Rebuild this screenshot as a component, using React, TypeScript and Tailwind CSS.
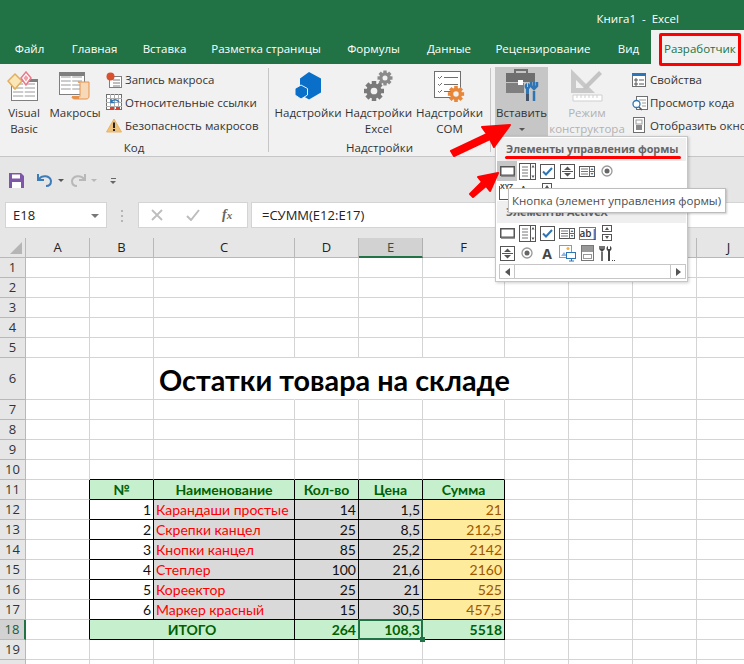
import type { ReactNode } from "react";

const colWidths = "grid-cols-[26px_64px_64px_141px_64px_64px_82px_64px_64px_64px_64px]";
const letters = ["A", "B", "C", "D", "E", "F", "G", "H", "I", "J"];

const tabs = [
  { label: "Файл", w: "w-[59px]" },
  { label: "Главная", w: "w-[71px]" },
  { label: "Вставка", w: "w-[69px]" },
  { label: "Разметка страницы", w: "w-[134px]" },
  { label: "Формулы", w: "w-[81px]" },
  { label: "Данные", w: "w-[70px]" },
  { label: "Рецензирование", w: "w-[118px]" },
  { label: "Вид", w: "w-[53px]" },
];

const items = [
  ["1", "Карандаши простые", "14", "1,5", "21"],
  ["2", "Скрепки канцел", "25", "8,5", "212,5"],
  ["3", "Кнопки канцел", "85", "25,2", "2142"],
  ["4", "Степлер", "100", "21,6", "2160"],
  ["5", "Кореектор", "25", "21", "525"],
  ["6", "Маркер красный", "15", "30,5", "457,5"],
];

const line = "border-r border-b border-[#d4d4d4]";
const boxed = "border-r border-b border-black";
const calibri = "[font-family:'Lato','Open_Sans',sans-serif]";
const cellText = `${calibri} text-[14px] leading-[20px] whitespace-nowrap px-[2px] text-[#111]`;

function Icon({ w, h, children, className }: { w: number; h: number; children: ReactNode; className?: string }) {
  return (
    <svg width={w} height={h} viewBox={`0 0 ${w} ${h}`} className={className}>
      {children}
    </svg>
  );
}

function Sheet({ x, y, w, h }: { x: number; y: number; w: number; h: number }) {
  const rows = [];
  for (let yy = y + 5; yy < y + h - 1; yy += 4) rows.push(<path key={yy} d={`M${x + 2} ${yy}H${x + w - 2}`} stroke="#9a9a9a" />);
  return (
    <g>
      <rect x={x + 0.5} y={y + 0.5} width={w} height={h} fill="#fff" stroke="#7f7f7f" />
      {rows}
      <path d={`M${x + w / 2} ${y + 3}V${y + h - 2}`} stroke="#fff" strokeWidth="1.5" />
    </g>
  );
}

function VbaIcon() {
  return (
    <Icon w={34} h={30}>
      <Sheet x={4} y={8} w={26} h={21} />
      <rect x={4} y={8} width={26} height={3} fill="#7f7f7f" />
      <path d="M8 3l7 7-7 8-7-8z" fill="#fbe6b8" stroke="#e0b060" strokeWidth="1.5" />
      <path d="M19 1l5 6-5 7-5-7z" fill="#fff" stroke="#e77a8a" strokeWidth="1.5" />
      <path d="M19 4l2.500 3-2.500 3.500-2.500-3.500z" fill="#f0a0a8" />
    </Icon>
  );
}

function MacroIcon() {
  return (
    <Icon w={34} h={30}>
      <Sheet x={1} y={1} w={25} h={22} />
      <rect x={1} y={1} width={26} height={4} fill="#7f7f7f" />
      <path d="M20 11h11v14c0 2-1 3-3 3h-11c-2 0-3-1-3-2h7c1 0 1-1 1-2v-11c0-1 0-2-2-2z" fill="#f5d9b8" stroke="#e8914a" />
      <path d="M14 25h7v3h-5c-1 0-2-1-2-3z" fill="#e8914a" />
    </Icon>
  );
}

function RecordIcon() {
  return (
    <Icon w={17} h={16}>
      <rect x={3.500} y={4.500} width={12} height={11} fill="#fff" stroke="#7f7f7f" />
      <path d="M7 8h7M7 11h7M7 14h7" stroke="#7f7f7f" />
      <circle cx={4.500} cy={4.500} r={4} fill="#d9502e" />
    </Icon>
  );
}

function RelativeIcon() {
  return (
    <Icon w={17} h={17}>
      <rect x={0.500} y={0.500} width={15} height={15} fill="#fff" stroke="#6f6f6f" />
      <path d="M0 4.500h16M0 8.500h16M0 12.500h16M4.500 0v16M8.500 0v16M12.500 0v16" stroke="#b0b0b0" />
      <rect x={4} y={13} width={4} height={3} fill="#d9402e" />
      <rect x={10} y={13} width={4} height={3} fill="#d9402e" />
      <path d="M5 8c2-3 6-3 8 0M5 5v3.500h3.500" fill="none" stroke="#2e75b6" strokeWidth="1.500" />
    </Icon>
  );
}

function WarningIcon() {
  return (
    <Icon w={16} h={15}>
      <path d="M8 1l7.500 13H.5z" fill="#edc27c" stroke="#e8b566" />
      <rect x={7} y={4.500} width={2} height={5.500} fill="#222" />
      <rect x={7} y={11} width={2} height={2} fill="#222" />
    </Icon>
  );
}

function AddinIcon() {
  return (
    <Icon w={28} h={30}>
      <path d="M15 1l12 6.500v14l-12 7-6-3.500v-9l-3-1.500V7.500z" fill="#0a6fc9" />
      <path d="M7 14l6.500 3.500v6.500l-6.500 4-6-4v-6.500z" fill="#0a6fc9" stroke="#f1f1f1" />
    </Icon>
  );
}

function GearShape({ cx, cy, r, fill }: { cx: number; cy: number; r: number; fill: string }) {
  const teeth = [0, 45, 90, 135].map((a) => (
    <rect key={a} x={cx - r * 0.28} y={cy - r * 1.25} width={r * 0.56} height={r * 2.5} fill={fill} transform={`rotate(${a} ${cx} ${cy})`} />
  ));
  return (
    <g>
      {teeth}
      <circle cx={cx} cy={cy} r={r * 0.95} fill={fill} />
      <circle cx={cx} cy={cy} r={r * 0.42} fill="#f1f1f1" />
    </g>
  );
}

function GearsIcon() {
  return (
    <Icon w={30} h={32}>
      <GearShape cx={21} cy={8} r={6} fill="#8a8a8a" />
      <GearShape cx={10} cy={21} r={8} fill="#7a7a7a" />
    </Icon>
  );
}

function ComIcon() {
  return (
    <Icon w={33} h={32}>
      <rect x={1.500} y={1.500} width={26} height={26} fill="#fff" stroke="#6f6f6f" />
      <path d="M5 7l1.500 1.500L9 6M5 14l1.500 1.500L9 13M5 21l1.500 1.500L9 20" fill="none" stroke="#6f6f6f" />
      <path d="M11 7.500h14M11 14.500h14M11 21.500h7" stroke="#6f6f6f" />
      <GearShape cx={23} cy={24} r={6.500} fill="#e8873a" />
    </Icon>
  );
}

function BriefcaseIcon() {
  return (
    <Icon w={34} h={36}>
      <path d="M10 5V2h12v3" fill="none" stroke="#6f6f6f" strokeWidth="2" />
      <rect x={1} y={5} width={29} height={9} fill="#6f6f6f" />
      <rect x={1} y={15} width={18} height={10} fill="#7f7f7f" />
      <rect x={13} y={12} width={5} height={5} fill="#fff" />
      <path d="M22 15c-3 1-3 5-1 6v12h3V21c2-1 2-5-1-6v4h-1z" fill="#2e75b6" />
      <path d="M29 14v7M26 14v4l3 3 3-3v-4M29 23v10" fill="none" stroke="#2e75b6" strokeWidth="2.500" />
      <path d="M21 26h3v7h-3z" fill="#44546a" />
    </Icon>
  );
}

function DesignIcon() {
  return (
    <Icon w={34} h={36}>
      <path d="M1 1v24h24zM6 12v8h8z" fill="#c9c9c9" fillRule="evenodd" />
      <path d="M14 18L29 3l3 3-15 15-4 1z" fill="#c4c4c4" />
      <path d="M3 27h29v6H3z" fill="#fff" stroke="#cfcfcf" />
      <path d="M7 27v3M11 27v3M15 27v3M19 27v3M23 27v3M27 27v3" stroke="#cfcfcf" />
    </Icon>
  );
}

function PropertiesIcon() {
  return (
    <Icon w={16} h={16}>
      <rect x={1.500} y={1.500} width={13} height={13} fill="#fff" stroke="#6f6f6f" />
      <rect x={1} y={1} width={14} height={3} fill="#2e75b6" />
      <path d="M4 7h2v2H4zM4 11h2v2H4z" fill="none" stroke="#555" />
      <path d="M8 8h5M8 12h5" stroke="#555" />
    </Icon>
  );
}

function CodeIcon() {
  return (
    <Icon w={18} h={16}>
      <rect x={5.500} y={1.500} width={11} height={13} fill="#fff" stroke="#6f6f6f" />
      <path d="M8 5h7M11 8h4M11 11h4" stroke="#999" />
      <circle cx={5.500} cy={9} r={3.500} fill="#fff" stroke="#2e75b6" strokeWidth="1.300" />
      <path d="M8 12l3 3" stroke="#555" strokeWidth="1.500" />
    </Icon>
  );
}

function WindowIcon() {
  return (
    <Icon w={16} h={17}>
      <rect x={2.500} y={0.500} width={11} height={15} fill="#fff" stroke="#6f6f6f" />
      <rect x={5} y={3} width={6} height={4} fill="#fff" stroke="#9a9a9a" />
      <rect x={5} y={8} width={6} height={5} fill="#8a8a8a" />
    </Icon>
  );
}

// элементы выпадающего списка
function CtlButton() {
  return (
    <Icon w={15} h={11}>
      <rect x={0.750} y={0.750} width={13.500} height={8.500} fill="#fff" stroke="#555" strokeWidth="1.500" />
      <path d="M1 10h14" stroke="#777" strokeWidth="1.500" />
    </Icon>
  );
}
function CtlList() {
  return (
    <Icon w={17} h={17}>
      <rect x={0.500} y={0.500} width={16} height={16} fill="#fff" stroke="#555" />
      <path d="M11.500 0v17" stroke="#555" />
      <path d="M3 4h6M3 7h6M3 10h6M3 13h6" stroke="#777" />
      <path d="M14 2l1.500 2.500h-3zM14 15l1.500-2.500h-3z" fill="#555" />
    </Icon>
  );
}
function CtlCheck() {
  return (
    <Icon w={15} h={15}>
      <rect x={0.500} y={0.500} width={14} height={14} fill="#fff" stroke="#555" />
      <path d="M3 7.500l3 3 6-6.500" fill="none" stroke="#2e75b6" strokeWidth="2" />
    </Icon>
  );
}
function CtlSpin() {
  return (
    <Icon w={15} h={15}>
      <rect x={0.500} y={0.500} width={14} height={14} fill="#fff" stroke="#555" />
      <path d="M2 7.500h11" stroke="#555" />
      <path d="M7.500 2.500l3.500 3.500H4zM7.500 12.500l3.500-3.500H4z" fill="#555" />
    </Icon>
  );
}
function CtlListSpin() {
  return (
    <Icon w={16} h={11}>
      <rect x={0.500} y={0.500} width={15} height={10} fill="#fff" stroke="#555" />
      <path d="M10.500 0v11M10.500 5.500H16" stroke="#2e75b6" />
      <path d="M2 3h7M2 5.500h7M2 8h7" stroke="#777" />
      <path d="M13 2l1.500 2h-3zM13 9l1.500-2h-3z" fill="#2e75b6" />
    </Icon>
  );
}
function CtlRadio() {
  return (
    <Icon w={12} h={12}>
      <circle cx={6} cy={6} r={5} fill="#fff" stroke="#999" strokeWidth="1.300" />
      <circle cx={6} cy={6} r={2.500} fill="#666" />
    </Icon>
  );
}
function CtlVSpin() {
  return (
    <Icon w={10} h={16}>
      <rect x={0.500} y={0.500} width={9} height={6} fill="#fff" stroke="#555" />
      <rect x={0.500} y={9.500} width={9} height={6} fill="#fff" stroke="#555" />
      <path d="M5 2l2 3H3zM5 14l2-3H3z" fill="#555" />
    </Icon>
  );
}
function CtlGroup() {
  return (
    <div className="relative h-[18px] w-[16px]">
      <div className="absolute bottom-0 left-0 h-[14px] w-[14px] border border-[#555]" />
      <span className="absolute left-[1px] top-0 bg-white text-[7px] font-bold leading-[9px] text-[#444]">XYZ</span>
    </div>
  );
}
function CtlImage() {
  return (
    <Icon w={17} h={17}>
      <rect x={0.500} y={0.500} width={12} height={12} fill="#fff" stroke="#999" />
      <path d="M2 11l3-4 3 4z" fill="#8db4e2" />
      <circle cx={9} cy={3.500} r={1.500} fill="#f0b040" />
      <rect x={7.500} y={7.500} width={9} height={6} fill="#fff" stroke="#2e75b6" />
      <path d="M10 16h5M12.500 14v2" stroke="#2e75b6" />
    </Icon>
  );
}
function CtlToggle() {
  return (
    <Icon w={13} h={16}>
      <rect x={0.500} y={0.500} width={12} height={15} fill="#fff" stroke="#777" />
      <rect x={1} y={1} width={11} height={6} fill="#999" />
      <rect x={2.500} y={9.500} width={8} height={4} fill="#fff" stroke="#999" />
    </Icon>
  );
}
function CtlTools() {
  return (
    <Icon w={17} h={17}>
      <path d="M3 1v5M1 1v3l2 2 2-2V1M3 7v9" fill="none" stroke="#444" strokeWidth="1.500" />
      <path d="M9 1c-2 1-2 4 0 5v10h2V6c2-1 2-4 0-5v3H9z" fill="#444" />
      <path d="M13 15h1v1h-1zM15 15h1v1h-1z" fill="#444" />
    </Icon>
  );
}

function BigButton({ icon, lines, width, muted, active }: { icon: ReactNode; lines: ReactNode[]; width: string; muted?: boolean; active?: boolean }) {
  return (
    <div className={`${width} flex h-[70px] shrink-0 flex-col items-center ${active ? "bg-[#c6c6c6]" : ""}`}>
      <div className="flex h-[38px] w-full items-center justify-center">{icon}</div>
      {lines.map((l, i) => (
        <div key={i} className={`h-[16px] whitespace-nowrap text-[11.5px] leading-[16px] ${muted ? "text-[#b1b1b1]" : "text-[#333]"}`}>
          {l}
        </div>
      ))}
    </div>
  );
}

function SmallButton({ icon, label }: { icon: ReactNode; label: string }) {
  return (
    <div className="flex h-[23px] items-center whitespace-nowrap text-[11.5px] text-[#333]">
      <div className="flex w-[18px] shrink-0 items-center">{icon}</div>
      <span className="ml-[1px]">{label}</span>
    </div>
  );
}

function Group({ width, label, children }: { width: string; label?: string; children: ReactNode }) {
  return (
    <div className={`${width} flex h-full shrink-0 flex-col`}>
      <div className="flex h-[76px] pt-[3px]">{children}</div>
      <div className="h-[16px] text-center text-[11.5px] leading-[15px] text-[#333]">{label}</div>
    </div>
  );
}

function Separator() {
  return <div className="mt-[4px] h-[84px] w-px shrink-0 bg-[#c6c6c6]" />;
}

function Ribbon() {
  return (
    <div className="flex h-[93px] shrink-0 border-b border-[#c6c6c6] bg-[#f1f1f1]">
      <Group width="w-[268px]" label="Код">
        <BigButton width="w-[48px]" icon={<VbaIcon />} lines={["Visual", "Basic"]} />
        <BigButton width="w-[54px]" icon={<MacroIcon />} lines={["Макросы"]} />
        <div className="ml-[4px] mt-[1px] flex flex-col">
          <SmallButton icon={<RecordIcon />} label="Запись макроса" />
          <SmallButton icon={<RelativeIcon />} label="Относительные ссылки" />
          <SmallButton icon={<WarningIcon />} label="Безопасность макросов" />
        </div>
      </Group>
      <Separator />
      <Group width="w-[221px]" label="Надстройки">
        <div className="flex pl-[4px]">
          <BigButton width="w-[70px]" icon={<AddinIcon />} lines={["Надстройки"]} />
          <BigButton width="w-[71px]" icon={<GearsIcon />} lines={["Надстройки", "Excel"]} />
          <BigButton width="w-[71px]" icon={<ComIcon />} lines={["Надстройки", "COM"]} />
        </div>
      </Group>
      <Separator />
      <Group width="w-[253px]">
        <div className="flex pl-[4px]">
          <BigButton
            width="w-[53px]"
            active
            icon={<BriefcaseIcon />}
            lines={["Вставить", <span key="c" className="mt-[7px] block h-0 w-0 border-x-[3px] border-t-[3px] border-x-transparent border-t-[#555]" />]}
          />
          <BigButton width="w-[78px]" muted icon={<DesignIcon />} lines={["Режим", "конструктора"]} />
          <div className="ml-[5px] mt-[1px] flex flex-col">
            <SmallButton icon={<PropertiesIcon />} label="Свойства" />
            <SmallButton icon={<CodeIcon />} label="Просмотр кода" />
            <SmallButton icon={<WindowIcon />} label="Отобразить окно" />
          </div>
        </div>
      </Group>
    </div>
  );
}

function QuickAccess() {
  return (
    <div className="flex h-[45px] shrink-0 items-center pl-[9px] pt-[2px]">
      <Icon w={15} h={15}>
        <path d="M0 0h12l3 3v12H0z" fill="#7e57a8" />
        <rect x={3} y={1.500} width={8} height={4} fill="#fff" />
        <rect x={3} y={9} width={9} height={6} fill="#fff" />
      </Icon>
      <Icon w={16} h={15} className="ml-[13px]">
        <path d="M2 6c3-4 11-4 12 2 0 3-2 5-5 5" fill="none" stroke="#3e7cb8" strokeWidth="2" />
        <path d="M1 1v6h6" fill="none" stroke="#3e7cb8" strokeWidth="2" />
      </Icon>
      <span className="ml-[5px] h-0 w-0 border-x-[3px] border-t-[3px] border-x-transparent border-t-[#555]" />
      <Icon w={16} h={15} className="ml-[6px]">
        <path d="M14 6c-3-4-11-4-12 2 0 3 2 5 5 5" fill="none" stroke="#b8b8b8" strokeWidth="2" />
        <path d="M15 1v6H9" fill="none" stroke="#b8b8b8" strokeWidth="2" />
      </Icon>
      <span className="ml-[5px] h-0 w-0 border-x-[3px] border-t-[3px] border-x-transparent border-t-[#b8b8b8]" />
      <div className="ml-[13px] flex flex-col items-center gap-[2px]">
        <span className="h-px w-[5px] bg-[#666]" />
        <span className="h-0 w-0 border-x-[3px] border-t-[3px] border-x-transparent border-t-[#666]" />
      </div>
    </div>
  );
}

function FormulaBar() {
  return (
    <div className="flex h-[36px] shrink-0 items-start">
      <div className="ml-[5px] flex h-[26px] w-[102px] items-center justify-between border border-[#d4d4d4] bg-white pl-[7px] pr-[7px] pt-px text-[13px] text-[#222]">
        <span>E18</span>
        <span className="h-0 w-0 border-x-[4px] border-t-[4px] border-x-transparent border-t-[#777]" />
      </div>
      <div className="ml-[14px] mt-[8px] flex w-[3px] flex-col gap-[3px]">
        <span className="h-[2px] w-[2px] bg-[#b5b5b5]" />
        <span className="h-[2px] w-[2px] bg-[#b5b5b5]" />
        <span className="h-[2px] w-[2px] bg-[#b5b5b5]" />
      </div>
      <div className="ml-[14px] flex h-[26px] w-[110px] items-center border border-[#d4d4d4] bg-white pl-[12px] text-[#bdbdbd]">
        <Icon w={12} h={12}>
          <path d="M1 1l10 10M11 1L1 11" stroke="#bdbdbd" strokeWidth="1.800" />
        </Icon>
        <Icon w={14} h={12} className="ml-[23px]">
          <path d="M1 7l4 4 8-10" fill="none" stroke="#bdbdbd" strokeWidth="2" />
        </Icon>
        <span className="ml-[22px] font-['Liberation_Serif',serif] text-[14px] font-bold italic leading-none text-[#666]">
          f<span className="text-[11px]">x</span>
        </span>
      </div>
      <div className="ml-[3px] flex h-[26px] flex-1 items-center border-y border-l border-[#d4d4d4] bg-white pl-[10px] pt-px text-[13px] text-[#222]">
        =СУММ(E12:E17)
      </div>
    </div>
  );
}

function Grid() {
  const cells: ReactNode[] = [];
  const headCell = `${calibri} text-[14px] font-bold text-[#006100]`;

  cells.push(
    <div key="corner" className="flex h-[20px] items-end justify-end border-r border-b border-[#b8b8b8] bg-[#e6e6e6] pb-[3px] pr-[3px]">
      <span className="h-0 w-0 border-b-[12px] border-l-[12px] border-b-[#b5b5b5] border-l-transparent" />
    </div>,
  );
  letters.forEach((l) =>
    cells.push(
      <div
        key={l}
        className={`flex h-[20px] items-center justify-center border-r pt-px text-[13px] ${
          l === "E" ? "border-b-2 border-r-[#b0b0b0] border-b-[#217346] bg-[#d2d2d2] text-[#1d5c39]" : "border-b border-[#b8b8b8] bg-[#e6e6e6] text-[#222]"
        }`}
      >
        {l}
      </div>,
    ),
  );

  for (let r = 1; r <= 20; r++) {
    const tall = r === 6;
    const h = tall ? "h-[42px]" : "h-[20px]";
    const selected = r === 18;
    cells.push(
      <div
        key={`h${r}`}
        className={`flex ${h} items-center justify-center border-b pt-px text-[13px] ${
          selected ? "border-r-2 border-r-[#217346] border-b-[#b8b8b8] bg-[#d2d2d2] text-[#1d5c39]" : "border-r border-[#b8b8b8] bg-[#e6e6e6] text-[#333]"
        }`}
      >
        {r < 20 ? r : ""}
      </div>,
    );

    if (r === 6) {
      cells.push(<div key="a6" className={`${h} ${line}`} />);
      cells.push(<div key="b6" className={`${h} ${line}`} />);
      cells.push(
        <div key="c6" className={`relative ${h} ${line} border-r-transparent`}>
          <span className={`absolute bottom-0 left-[5px] whitespace-nowrap ${calibri} text-[28.8px] font-bold leading-[38px] text-black`}>Остатки товара на складе</span>
        </div>,
      );
      ["d", "e", "f", "g", "h", "i", "j"].forEach((c) => cells.push(<div key={c + r} className={`${h} ${line} ${c === "e" || c === "f" || c === "d" ? "border-r-transparent" : ""}`} />));
      continue;
    }

    if (r === 11) {
      cells.push(<div key="a11" className={`${h} border-b border-r border-b-[#d4d4d4] border-r-black`} />);
      ["№", "Наименование", "Кол-во", "Цена", "Сумма"].forEach((t) =>
        cells.push(
          <div key={t} className={`flex ${h} items-center justify-center ${boxed} bg-[#c6efce] ${headCell}`}>
            {t}
          </div>,
        ),
      );
    } else if (r >= 12 && r <= 17) {
      const [n, name, qty, price, sum] = items[r - 12];
      cells.push(<div key={`a${r}`} className={`${h} border-b border-r border-b-[#d4d4d4] border-r-black`} />);
      cells.push(<div key={`b${r}`} className={`${h} ${boxed} ${cellText} bg-white text-right`}>{n}</div>);
      cells.push(<div key={`c${r}`} className={`${h} ${boxed} ${cellText} bg-[#d9d9d9] !text-[#ff0000]`}>{name}</div>);
      cells.push(<div key={`d${r}`} className={`${h} ${boxed} ${cellText} bg-[#d9d9d9] text-right`}>{qty}</div>);
      cells.push(<div key={`e${r}`} className={`${h} ${boxed} ${cellText} bg-[#d9d9d9] text-right`}>{price}</div>);
      cells.push(<div key={`f${r}`} className={`${h} ${boxed} ${cellText} bg-[#ffeb9c] text-right !text-[#9c5700]`}>{sum}</div>);
    } else if (r === 18) {
      const total = `${h} ${boxed} bg-[#c6efce] px-[2px] text-right leading-[20px] ${headCell}`;
      cells.push(<div key="a18" className={`${h} border-b border-r border-b-[#d4d4d4] border-r-black`} />);
      cells.push(
        <div key="b18" className={`col-span-2 flex ${h} items-center justify-center ${boxed} bg-[#c6efce] ${headCell}`}>
          ИТОГО
        </div>,
      );
      cells.push(<div key="d18" className={total}>264</div>);
      cells.push(
        <div key="e18" className={`relative ${total}`}>
          108,3
          <div className="absolute -left-px -top-px bottom-[-1px] right-[-1px] border-2 border-[#217346]" />
          <div className="absolute bottom-[-3px] right-[-3px] h-[5px] w-[5px] bg-[#217346]" />
        </div>,
      );
      cells.push(<div key="f18" className={total}>5518</div>);
    } else {
      letters.forEach((l) => cells.push(<div key={l + r} className={`${h} ${line} ${r === 10 && "BCDEF".includes(l) ? "border-b-black" : ""}`} />));
      continue;
    }
    ["G", "H", "I", "J"].forEach((l) => cells.push(<div key={l + r} className={`${h} ${line}`} />));
  }

  return <div className={`grid ${colWidths} bg-white`}>{cells}</div>;
}

function InsertMenu() {
  const slot = "flex h-[20px] w-[20px] items-center justify-center";
  const header = "flex h-[22px] items-center whitespace-nowrap bg-[#efefef] pl-[9px] text-[10.8px] font-bold text-[#666]";
  return (
    <div className="absolute left-[495px] top-[136px] h-[146px] w-[193px] border border-[#c6c6c6] bg-white p-px shadow-[1px_1px_3px_rgba(0,0,0,0.2)]">
      <div className={`${header} h-[23px]`}>Элементы управления формы</div>
      <div className="flex">
        <div className={`${slot} bg-[#c6c6c6]`}><CtlButton /></div>
        <div className={slot}><CtlList /></div>
        <div className={slot}><CtlCheck /></div>
        <div className={slot}><CtlSpin /></div>
        <div className={slot}><CtlListSpin /></div>
        <div className={slot}><CtlRadio /></div>
      </div>
      <div className="flex">
        <div className={slot}><CtlGroup /></div>
        <div className={`${slot} text-[13px] text-[#333]`}>Aa</div>
        <div className={slot}><CtlVSpin /></div>
      </div>
      <div className={header}>Элементы ActiveX</div>
      <div className="flex">
        <div className={slot}><CtlButton /></div>
        <div className={slot}><CtlList /></div>
        <div className={slot}><CtlCheck /></div>
        <div className={slot}><CtlListSpin /></div>
        <div className={slot}>
          <div className="h-[13px] w-[17px] border border-[#777] text-center text-[10px] font-semibold leading-[11px] text-[#333]">ab|</div>
        </div>
        <div className={slot}><CtlVSpin /></div>
      </div>
      <div className="flex">
        <div className={slot}><CtlSpin /></div>
        <div className={slot}><CtlRadio /></div>
        <div className={`${slot} text-[14px] font-bold text-[#444]`}>A</div>
        <div className={slot}><CtlImage /></div>
        <div className={slot}><CtlToggle /></div>
        <div className={slot}><CtlTools /></div>
      </div>
      <div className="ml-[2px] mt-px flex h-[15px] w-[187px] border border-[#c6c6c6] bg-white">
        <div className="flex w-[14px] items-center justify-center">
          <span className="h-0 w-0 border-y-[4px] border-r-[5px] border-y-transparent border-r-[#555]" />
        </div>
        <div className="flex-1 border-x border-[#c6c6c6]" />
        <div className="flex w-[14px] items-center justify-center">
          <span className="h-0 w-0 border-y-[4px] border-l-[5px] border-y-transparent border-l-[#555]" />
        </div>
      </div>
    </div>
  );
}

export default function App() {
  return (
    <div className="relative flex h-[664px] w-[744px] flex-col overflow-hidden bg-[#e6e6e6] [font-family:'Open_Sans','Noto_Sans',sans-serif]">
      <div className="flex h-[30px] shrink-0 items-end justify-end bg-[#217346] pr-[65px] text-[11.5px] text-white">
        <span className="whitespace-pre leading-[22px]">Книга1  -  Excel</span>
      </div>
      <div className="flex h-[34px] shrink-0 bg-[#217346] text-[11.5px] text-white">
        {tabs.map((t) => (
          <div key={t.label} className={`${t.w} shrink-0 whitespace-nowrap pt-[10px] text-center`}>
            {t.label}
          </div>
        ))}
        <div className="ml-[-4px] flex-1 bg-[#f1f1f1] pl-[13px] pt-[10px] text-[#217346]">Разработчик</div>
      </div>
      <Ribbon />
      <QuickAccess />
      <FormulaBar />
      <Grid />
      <InsertMenu />

      {/* подсказка поверх меню */}
      <div className="absolute left-[508px] top-[188px] flex h-[25px] w-[218px] items-center whitespace-nowrap border border-[#bdbdbd] bg-white pl-[3px] text-[11.5px] text-[#4c4c4c] shadow-[1px_1px_2px_rgba(0,0,0,0.2)]">
        Кнопка (элемент управления формы)
      </div>

      {/* красные пометки */}
      <div className="absolute left-[659px] top-[33px] h-[33px] w-[82px] rounded-[2px] border-[3px] border-[#ff0000]" />
      <div className="absolute left-[505px] top-[156px] h-[3px] w-[176px] rounded-full bg-[#ff0000]" />
      <svg width="744" height="664" viewBox="0 0 744 664" className="pointer-events-none absolute left-0 top-0">
        <path d="M510 125l-28 2 5 7-36 17 3 5 36-17 4 8z" fill="#ff0000" stroke="#ff0000" strokeLinejoin="round" strokeWidth="2" />
        <path d="M498 173l-20 4 4 5-12 12 3 3 13-11 4 5z" fill="#ff0000" stroke="#ff0000" strokeLinejoin="round" strokeWidth="2" />
      </svg>
    </div>
  );
}
